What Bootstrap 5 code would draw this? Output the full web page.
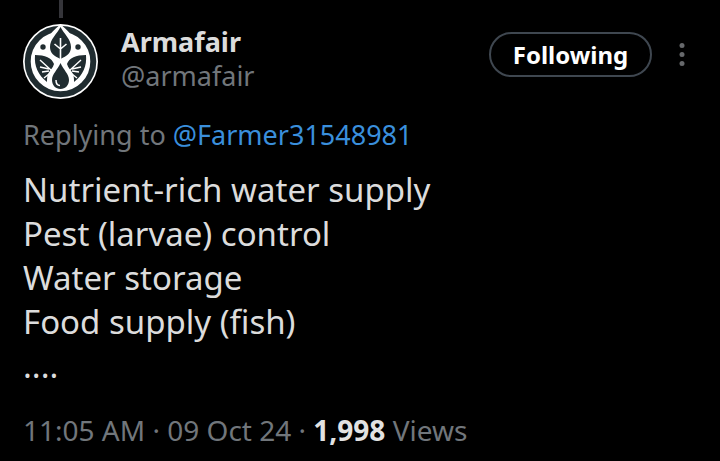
<!DOCTYPE html>
<html lang="en" data-bs-theme="dark">
<head>
<meta charset="utf-8">
<meta name="viewport" content="width=device-width, initial-scale=1">
<title>Armafair</title>
<link href="https://cdn.jsdelivr.net/npm/bootstrap@5.3.0/dist/css/bootstrap.min.css" rel="stylesheet">
<style>
body { background: #000; color: #dcdcdc; font-family: "Noto Sans", "Open Sans", sans-serif; }
.post { padding: 0 23px; }
.thread-line { width: 4px; height: 18px; margin-left: 36px; background: #35353a; }
.post-head { padding-top: 6px; }
.avatar { width: 75px; height: 75px; }
.identity { margin-left: 23px; padding-top: 1px; line-height: 34px; }
.name { font-size: 27px; }
.muted { color: #71767b; }
.handle, .reply { font-size: 27px; }
.btn-follow { width: 163px; height: 45px; padding: 0; border: 2px solid #3f4750; color: #fff; font-size: 24px; line-height: 38px; }
.btn-more { width: 16px; height: 32px; margin: 0 7px 0 22px; }
.reply { margin-top: 16px; line-height: 40px; }
.reply a { color: #3a8fdc; }
.message { margin-top: 13px; font-size: 33px; line-height: 44px; }
.meta { margin-top: 22px; font-size: 28px; line-height: 40px; }
.meta strong { color: #e2e2e2; }
</style>
</head>
<body>
<article class="post">
  <div class="thread-line"></div>
  <header class="post-head d-flex align-items-start">
    <svg class="avatar flex-shrink-0" viewBox="0 0 75 75" role="img" aria-label="Armafair logo">
      <circle cx="37.500" cy="37.500" r="37.500" fill="#fff"/>
      <circle cx="37.500" cy="37.500" r="32.800" fill="none" stroke="#202c30" stroke-width="6"/>
      <path d="M37.500 0C32 6 22 12 22 24h31C53 12 43 6 37.500 0Z" fill="#fff"/>
      <path d="M37.500 3C34 10 27 15 27 23c0 6 4 9 10.500 12C44 32 48 29 48 23 48 15 41 10 37.500 3Z" fill="#202c30"/>
      <path d="M37.500 14v21M37.500 25l-6-5M37.500 25l6-5" fill="none" stroke="#fff" stroke-width="1.600"/>
      <circle cx="20" cy="23" r="2.700" fill="#202c30"/>
      <circle cx="55" cy="23" r="2.700" fill="#202c30"/>
      <path d="M12 31c10 0 17 3 19 9-1 4-4 6-6 10-1 3-1 5-1 8-9-7-13-16-12-27ZM63 31c-10 0-17 3-19 9 1 4 4 6 6 10 1 3 1 5 1 8 9-7 13-16 12-27Z" fill="#202c30"/>
      <path d="M17 36l12 11M17 43l9 2M19 48l7-1M21 54l5-4M58 36L46 47M58 43l-9 2M56 48l-7-1M54 54l-5-4" fill="none" stroke="#fff" stroke-width="1.400"/>
      <path d="M37.500 39c-3 7-8.500 11-8.500 17 0 5 3.500 9 8.500 9s8.500-4 8.500-9c0-6-5.500-10-8.500-17Z" fill="#202c30"/>
      <path d="M33 56c0 4 2 5.500 4 5.500" fill="none" stroke="#fff" stroke-width="1.500"/>
    </svg>
    <div class="identity flex-grow-1">
      <div class="name fw-bold">Armafair</div>
      <div class="handle muted">@armafair</div>
    </div>
    <div class="d-flex align-items-center pt-2">
      <button type="button" class="btn btn-follow rounded-pill fw-bold">Following</button>
      <button type="button" class="btn btn-more border-0 p-0 d-flex" aria-label="More options">
        <svg width="16" height="32" viewBox="0 0 16 32" fill="#66686b"><circle cx="8" cy="6.500" r="2.500"/><circle cx="8" cy="15.500" r="2.500"/><circle cx="8" cy="24.500" r="2.500"/></svg>
      </button>
    </div>
  </header>
  <div class="reply muted">Replying to <a href="#" class="text-decoration-none">@Farmer31548981</a></div>
  <div class="message">
    <div>Nutrient-rich water supply</div>
    <div>Pest (larvae) control</div>
    <div>Water storage</div>
    <div>Food supply (fish)</div>
    <div>....</div>
  </div>
  <footer class="meta muted">11:05 AM · 09 Oct 24 · <strong>1,998</strong> Views</footer>
</article>
<script src="https://cdn.jsdelivr.net/npm/bootstrap@5.3.0/dist/js/bootstrap.bundle.min.js"></script>
</body>
</html>
